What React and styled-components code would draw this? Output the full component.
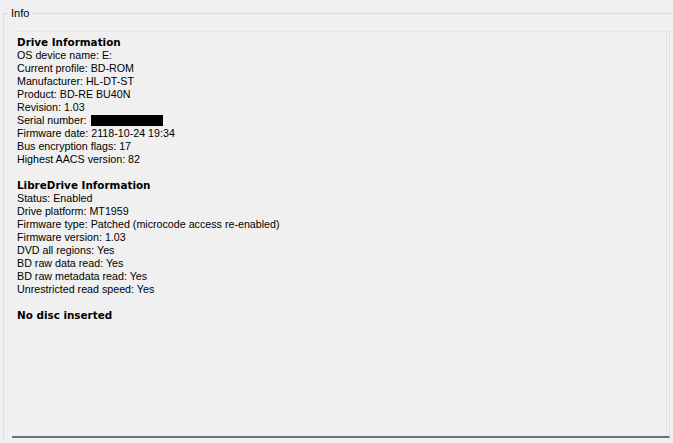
import React from "react";
import styled, { createGlobalStyle } from "styled-components";

const GlobalStyle = createGlobalStyle`
  html, body {
    margin: 0;
    padding: 0;
    background: #f0f0f0;
  }
  body {
    font-family: "Liberation Sans", Arial, sans-serif;
    font-size: 10.7px;
    color: #000;
  }
`;

const Window = styled.div`
  width: 673px;
  height: 443px;
  padding: 13px 0 5px 3px;
  box-sizing: border-box;
  background: #f0f0f0;
  overflow: hidden;
`;

const GroupBox = styled.div`
  position: relative;
  height: 100%;
  border-top: 1px solid #dcdcdc;
  border-left: 1px solid #dcdcdc;
  box-sizing: border-box;
  padding: 17px 3px 0 8px;
`;

/* caption sits over the top border line */
const Legend = styled.span`
  position: absolute;
  top: -7px;
  left: 4px;
  padding: 0 3px;
  background: #f0f0f0;
  line-height: 13px;
  font-size: 11px;
`;

const Panel = styled.div`
  height: 100%;
  box-sizing: border-box;
  border-top: 1px solid #e6e6e6;
  border-right: 1px solid #e0e0e0;
  border-bottom: 2px solid #707070;
  padding: 4px 5px 0 5px;
  box-shadow: inset -2px 0 0 #f0f0f0, inset -3px 0 0 #e4e4e4;
`;

const Section = styled.div`
  margin-bottom: 13px;
`;

const Title = styled.div`
  font-family: "DejaVu Sans", "Liberation Sans", sans-serif;
  font-weight: bold;
  font-size: 10.4px;
  line-height: 13px;
`;

const Line = styled.div`
  line-height: 13px;
  white-space: nowrap;
`;

const Redacted = styled.span`
  display: inline-block;
  width: 72px;
  height: 11px;
  margin-left: 4px;
  background: #000;
  vertical-align: -2px;
`;

const drive = [
  "OS device name: E:",
  "Current profile: BD-ROM",
  "Manufacturer: HL-DT-ST",
  "Product: BD-RE BU40N",
  "Revision: 1.03",
  null,
  "Firmware date: 2118-10-24 19:34",
  "Bus encryption flags: 17",
  "Highest AACS version: 82",
];

const libre = [
  "Status: Enabled",
  "Drive platform: MT1959",
  "Firmware type: Patched (microcode access re-enabled)",
  "Firmware version: 1.03",
  "DVD all regions: Yes",
  "BD raw data read: Yes",
  "BD raw metadata read: Yes",
  "Unrestricted read speed: Yes",
];

export default function App() {
  return (
    <>
      <GlobalStyle />
      <Window>
        <GroupBox>
          <Legend>Info</Legend>
          <Panel>
            <Section>
              <Title>Drive Information</Title>
              {drive.map((t, i) =>
                t === null ? (
                  <Line key={i}>
                    Serial number:
                    <Redacted />
                  </Line>
                ) : (
                  <Line key={i}>{t}</Line>
                )
              )}
            </Section>
            <Section>
              <Title>LibreDrive Information</Title>
              {libre.map((t, i) => (
                <Line key={i}>{t}</Line>
              ))}
            </Section>
            <Section>
              <Title>No disc inserted</Title>
            </Section>
          </Panel>
        </GroupBox>
      </Window>
    </>
  );
}
